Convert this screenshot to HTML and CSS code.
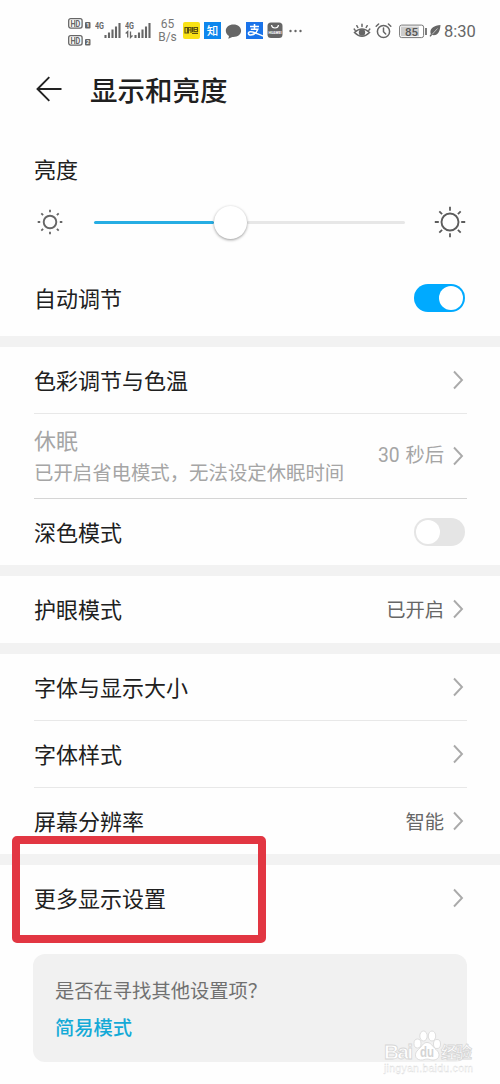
FILE: index.html
```html
<!DOCTYPE html>
<html lang="zh-CN">
<head>
<meta charset="utf-8">
<title>显示和亮度</title>
<link rel="stylesheet" href="styles.css">
</head>
<body>
<main class="screen">
  <div class="status">
    <svg class="hd" width="24" height="30" viewBox="0 0 24 30">
      <g fill="none" stroke="#666" stroke-width="1.3"><rect x=".7" y="2.7" width="13.4" height="9.4" rx="2"/><rect x=".7" y="19.7" width="13.4" height="9.4" rx="2"/></g>
      <g fill="#666"><rect x="17" y="6" width="5.5" height="6.5" rx="1"/><rect x="17" y="23" width="5.5" height="6.5" rx="1"/></g>
      <text class="hd-text" x="2.4" y="10.7" textLength="10" lengthAdjust="spacingAndGlyphs">HD</text><text class="hd-text" x="2.4" y="27.7" textLength="10" lengthAdjust="spacingAndGlyphs">HD</text>
      <text class="sim" x="18.2" y="11.4">1</text><text class="sim" x="18.2" y="28.4">2</text>
    </svg>
    <svg class="signal-one" width="27" height="20" viewBox="0 0 27 20">
      <text class="net" x="0" y="8.5" textLength="9" lengthAdjust="spacingAndGlyphs">4G</text>
      <path d="M10.500 18v-3M14 18v-5.500M17.500 18v-8.500M21 18v-11.500M24.500 18v-15" stroke="#666" stroke-width="2.100"/>
    </svg>
    <svg class="signal-two" width="27" height="20" viewBox="0 0 27 20">
      <text class="net" x="0" y="8.500" textLength="9" lengthAdjust="spacingAndGlyphs">4G</text>
      <path d="M2.700 17.500v-6l-2 2M5.500 11.500v6l2-2" fill="none" stroke="#666" stroke-width="1.300"/>
      <path d="M10.500 18v-3M14 18v-5.500M17.500 18v-8.500M21 18v-11.500M24.500 18v-15" stroke="#666" stroke-width="2.100"/>
    </svg>
    <div class="speed"><span>65</span><span>B/s</span></div>
    <div class="app yellow"><svg width="17" height="17" viewBox="0 0 17 17"><path d="M2 5.500h2.500v5.500H2zM5.500 5.500H8V11M5.500 8H8M5.500 5v6.500M9 11.300h6M9.500 5v5M11 5.500h3.500v4H11zM11 7.500h3.500" fill="none" stroke="#5b5010" stroke-width="1.200"/></svg></div>
    <div class="app zhihu">知</div>
    <svg class="bubble" width="17" height="17" viewBox="0 0 17 17"><path d="M8.500 1.500C4 1.500.8 4.200.8 7.800c0 2.100 1.200 4 3.200 5.100L3.300 15.800l4-1.900c5 .4 8.800-2.300 8.800-6.100 0-3.600-3.100-6.300-7.600-6.300z" fill="#666"/></svg>
    <div class="app alipay"><svg width="17" height="17" viewBox="0 0 17 17"><path d="M4 4.500h9M8.500 2v5.300M4.800 7.300h7C10.800 10 8.500 13 4.800 13c-3 0-3.300-3.200-.3-3.300 3-.1 7 2.200 12.500 4.300" fill="none" stroke="#fff" stroke-width="1.500"/></svg></div>
    <svg class="huawei" width="16" height="17" viewBox="0 0 16 17"><rect x=".5" y=".5" width="15" height="15.500" rx="3.500" fill="#666"/><path d="M4.500 3c.5 4 6.500 4 7 0" fill="none" stroke="#fff" stroke-width="1.200"/><text class="brand" x="1.500" y="11.500" textLength="13">HUAWEI</text></svg>
    <svg class="dots" width="13" height="4" viewBox="0 0 13 4"><g fill="#666"><circle cx="1.500" cy="2" r="1.200"/><circle cx="6.500" cy="2" r="1.200"/><circle cx="11.500" cy="2" r="1.200"/></g></svg>
    <svg class="eye" width="18" height="18" viewBox="0 0 18 18"><g fill="none" stroke="#666" stroke-width="1.500" stroke-linecap="round"><path d="M1.500 10.500Q9 3.500 16.500 10.500Q9 18 1.500 10.500zM9 4.500V2.300M4.800 5.500 3.800 3.700M13.200 5.500l1-1.800M2 8.200 1.200 7M16 8.200l.8-1.200"/></g><circle cx="9" cy="10.500" r="3.200" fill="#666"/></svg>
    <svg class="alarm" width="17" height="18" viewBox="0 0 17 18"><g fill="none" stroke="#666" stroke-width="1.500" stroke-linecap="round"><circle cx="8.500" cy="9.500" r="6.100"/><path d="M8.500 6v3.800l2.200 2.200M1.200 4.200 3.600 2M15.800 4.200 13.400 2"/></g></svg>
    <svg class="battery" width="29" height="15" viewBox="0 0 29 15"><rect x=".6" y="1.100" width="24" height="12.500" rx="2" fill="#fff" stroke="#777"/><path d="M2 2.500h18v9.700H2z" fill="#ccc"/><path d="M27 4v7" stroke="#666" stroke-width="1.700"/><text class="charge" x="6" y="11.700" textLength="13">85</text></svg>
    <svg class="leaf" width="12" height="14" viewBox="0 0 12 14"><path d="M11.500 1C5 1.500 1.500 4 1.400 8c0 1 .2 1.500.5 2.100L.5 12l1 .8 1.600-1.700C9 12.200 11 7.500 11.500 1z" fill="#666"/><path d="M3 10.500 8.500 4.500" stroke="#fff" stroke-width=".6"/></svg>
    <span class="time">8:30</span>
  </div>
  <header class="header">
    <svg width="26" height="26" viewBox="0 0 26 26"><path d="M25.500 13H1.500M13.300 1.200 1.500 13 13.300 24.800" fill="none" stroke="#222" stroke-width="1.900"/></svg>
    <h1>显示和亮度</h1>
  </header>
  <section>
    <div class="label">亮度</div>
    <div class="brightness">
      <svg width="26" height="26" viewBox="-13 -13 26 26"><circle r="6.300" fill="none" stroke="#666" stroke-width="1.900"/><path d="M0-12.300v2.500M0 9.800v2.500M-12.300 0h2.500M9.800 0h2.500M-8.700-8.700l1.800 1.800M6.900 6.900l1.800 1.800M-8.700 8.700l1.800-1.800M6.900-6.900l1.800-1.800" stroke="#666" stroke-width="1.800"/></svg>
      <div class="slider"><div class="filled"></div><div class="knob"></div><div class="rest"></div></div>
      <svg width="32" height="32" viewBox="-16 -16 32 32"><circle r="8.500" fill="none" stroke="#5c5c5c" stroke-width="1.900"/><path d="M0-15.200v4M0 11.200v4M-15.200 0h4M11.200 0h4M-10.700-10.700l2.800 2.800M7.900 7.900l2.800 2.800M-10.700 10.700l2.800-2.800M7.900-7.900l2.800-2.800" stroke="#5c5c5c" stroke-width="1.800"/></svg>
    </div>
    <div class="row auto"><span>自动调节</span><i class="switch on"></i></div>
  </section>
  <section class="group">
    <div class="row"><span>色彩调节与色温</span><svg class="chevron" viewBox="0 0 12 20"><path d="M2 1.500 10 10 2 18.500"/></svg></div>
    <div class="row sleep"><div><div class="sleep-title">休眠</div><div class="sleep-note">已开启省电模式，无法设定休眠时间</div></div><span class="value pale">30 秒后</span><svg class="chevron" viewBox="0 0 12 20"><path d="M2 1.500 10 10 2 18.500"/></svg></div>
    <div class="row"><span>深色模式</span><i class="switch"></i></div>
  </section>
  <section class="group single">
    <div class="row"><span>护眼模式</span><span class="value">已开启</span><svg class="chevron" viewBox="0 0 12 20"><path d="M2 1.500 10 10 2 18.500"/></svg></div>
  </section>
  <section class="group">
    <div class="row"><span>字体与显示大小</span><svg class="chevron" viewBox="0 0 12 20"><path d="M2 1.500 10 10 2 18.500"/></svg></div>
    <div class="row"><span>字体样式</span><svg class="chevron" viewBox="0 0 12 20"><path d="M2 1.500 10 10 2 18.500"/></svg></div>
    <div class="row"><span>屏幕分辨率</span><span class="value">智能</span><svg class="chevron" viewBox="0 0 12 20"><path d="M2 1.500 10 10 2 18.500"/></svg></div>
  </section>
  <section class="group more">
    <div class="row"><span>更多显示设置</span><svg class="chevron" viewBox="0 0 12 20"><path d="M2 1.500 10 10 2 18.500"/></svg></div>
  </section>
  <aside class="card"><p>是否在寻找其他设置项？</p><a>简易模式</a></aside>
  <div class="highlight"></div>
  <svg class="watermark" width="96" height="48" viewBox="0 0 96 48">
    <g fill="#fff" stroke="#d6d6d6" stroke-width=".8">
      <ellipse cx="34.500" cy="15.500" rx="3.500" ry="4.500"/><ellipse cx="40.500" cy="8" rx="3.700" ry="5"/><ellipse cx="49" cy="8" rx="3.700" ry="5"/><ellipse cx="54" cy="16" rx="3.500" ry="4.500"/>
      <path d="M44 14.500c-4 0-5 4-8.500 7-5 4-3.500 10 2 10.500 3 .3 4-1 6.500-1s4 1.300 7 1c5.500-.5 7-6.500 2-10.500-3.500-3-5-7-9-7z"/>
      <text class="bai" x="1" y="31" textLength="29">Bai</text><text class="jingyan" x="58" y="29.500" textLength="31">经验</text>
      <text class="site" x="1" y="43.500" textLength="89">jingyan.baidu.com</text>
    </g>
    <text class="du" x="37" y="29" textLength="14" lengthAdjust="spacingAndGlyphs">du</text>
  </svg>
</main>
</body>
</html>
```
FILE: styles.css
```css
* { box-sizing: border-box; }
body { margin: 0; background: #fefefe; }
.screen { position: relative; width: 500px; height: 1084px; overflow: hidden; background: #fefefe; color: #202020; font-family: "Noto Sans CJK SC", sans-serif; font-size: 22px; line-height: 32px; }
svg { display: block; flex: none; }
.status { display: flex; align-items: center; height: 60px; padding-left: 68px; }
.hd { margin-top: 1px; }
.hd-text { font: 700 9px Roboto, sans-serif; fill: #666; }
.sim { font: 700 5.5px Roboto, sans-serif; fill: #fff; }
.net { font: 700 9px Roboto, sans-serif; fill: #666; }
.signal-one { margin-left: 3px; }
.signal-two { margin-left: 3px; }
.speed { display: flex; flex-direction: column; width: 23px; margin-left: 4px; text-align: center; font: 12px/13px Roboto, sans-serif; color: #777; margin-top: 2px; }
.app { width: 17px; height: 17px; flex: none; margin-top: 1px; font-size: 11.5px; line-height: 16px; font-weight: 500; text-align: center; color: #fff; }
.yellow { margin-left: 4px; border-radius: 2px; background: #f9e216; }
.zhihu { margin-left: 4px; background: #0d86ed; }
.bubble { margin-left: 4px; margin-top: 2px; }
.alipay { margin-left: 4px; background: #1a73ea; }
.huawei { margin-left: 4px; margin-top: 1px; }
.brand { font: 700 3.5px Roboto, sans-serif; fill: #fff; }
.dots { margin-left: 6px; margin-top: 2px; }
.eye { margin-left: 51px; margin-top: 1px; }
.alarm { margin-left: 4px; margin-top: 1px; }
.battery { margin-left: 7px; margin-top: 2px; }
.charge { font: 500 11.5px Roboto, sans-serif; fill: #555; }
.leaf { margin-left: 1px; margin-top: 1px; }
.time { margin-left: 3px; margin-top: 3px; font: 16.5px/20px Roboto, sans-serif; color: #666; }
.header { display: flex; align-items: center; height: 60px; padding: 0 0 2px 36px; }
.header h1 { margin: 0 0 0 28px; font-size: 27.5px; font-weight: 500; line-height: 40px; }
.label { height: 32px; margin: 32px 34px 1px; }
.brightness { display: flex; align-items: center; height: 74px; padding: 0 34px 0 37px; }
.slider { display: flex; align-items: center; width: 311px; margin: 0 29px 0 31px; }
.filled { width: 120px; height: 3px; border-radius: 2px; background: #26ade3; }
.knob { width: 33px; height: 33px; border-radius: 50%; background: #fff; box-shadow: 0 1px 3px rgba(0,0,0,.4); z-index: 1; }
.rest { flex: 1; height: 3px; border-radius: 2px; background: #e7e7e7; }
.row { display: flex; align-items: center; height: 67px; margin: 0 33px 0 34px; padding-bottom: 1px; border-bottom: 1px solid #e8e8e8; }
.row > span:first-child { padding-bottom: 2px; }
.row:last-child { border-bottom: 0; height: 66px; }
.row.auto { height: 77px; padding-top: 2px; }
.group { border-top: 11px solid #f2f2f2; }
.single .row:last-child { height: 67px; }
.row.sleep { height: 85px; border-bottom-color: #d5d5d5; }
.sleep-title { color: #a5a5a5; line-height: 31px; }
.sleep-note { color: #a5a5a5; font-size: 19.4px; line-height: 31px; white-space: nowrap; padding-top: 1px; }
.chevron { width: 12px; height: 20px; margin-left: auto; margin-right: 3px; fill: none; stroke: #aaa; stroke-width: 1.9; }
.value { margin-left: auto; font-size: 19.3px; color: #666; }
.value + .chevron { margin-left: 8px; }
.value.pale { color: #a5a5a5; font-family: Roboto, "Noto Sans CJK SC", sans-serif; word-spacing: 1px; }
.switch { display: flex; align-items: center; width: 51px; height: 28px; padding: 2px; border-radius: 14px; background: #e5e5e5; margin-left: auto; margin-right: 2px; }
.switch::before { content: ""; width: 24px; height: 24px; border-radius: 50%; background: #fff; }
.switch.on { justify-content: flex-end; background: #00aaff; }
.card { height: 108px; margin: 23px 33px 0; padding: 21px 22px; border-radius: 12px; background: #f1f1f1; font-size: 19.3px; line-height: 31px; color: #707070; }
.card p { margin: 0 0 6px; white-space: nowrap; }
.card a { display: block; color: #14aad7; font-weight: 500; }
.highlight { position: absolute; left: 12px; top: 836px; width: 254px; height: 107px; border: 8px solid #e23642; border-radius: 5px; }
.watermark { position: absolute; left: 383px; top: 1028px; }
.bai { font: 700 21px "Liberation Sans", sans-serif; }
.jingyan { font: 700 16px "Noto Sans CJK SC", sans-serif; }
.site { font: 10.5px "Liberation Sans", sans-serif; stroke-width: .3; }
.du { font: 700 14px "Liberation Sans", sans-serif; fill: #d4d4d4; }
```
